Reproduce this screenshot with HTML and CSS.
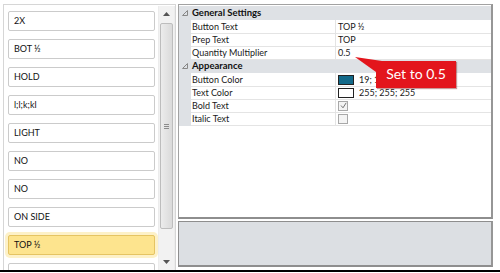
FILE: index.html
```html
<!DOCTYPE html>
<html lang="en">
<head>
  <meta charset="UTF-8" />
  <title>Button Editor</title>
  <link rel="stylesheet" href="styles.css">
</head>
<body>
  <div class="window">
    <div class="list-panel">
      <div class="items">
        <div class="item">2X</div>
        <div class="item">BOT ½</div>
        <div class="item">HOLD</div>
        <div class="item">l;l;k;kl</div>
        <div class="item">LIGHT</div>
        <div class="item">NO</div>
        <div class="item">NO</div>
        <div class="item">ON SIDE</div>
        <div class="item selected">TOP ½</div>
        <div class="item"></div>
      </div>
      <div class="scrollbar">
        <div class="arrow">
          <svg width="7" height="4" viewBox="0 0 7 4"><path d="M0 4 L3.5 0 L7 4 Z" fill="#555"/></svg>
        </div>
        <div class="track">
          <div class="thumb"><span class="grip"></span></div>
        </div>
        <div class="arrow">
          <svg width="7" height="4" viewBox="0 0 7 4"><path d="M0 0 L3.5 4 L7 0 Z" fill="#555"/></svg>
        </div>
      </div>
    </div>

    <div class="right-col">
      <div class="prop-grid">
        <div class="row category">
          <div class="gutter"><svg width="6" height="6" viewBox="0 0 6 6"><path d="M5.5 0.5 L5.5 5.5 L0.5 5.5 Z" fill="none" stroke="#888" stroke-width="1"/></svg></div>
          <div class="cat-name">General Settings</div>
        </div>
        <div class="row">
          <div class="gutter"></div>
          <div class="name">Button Text</div>
          <div class="value">TOP ½</div>
        </div>
        <div class="row">
          <div class="gutter"></div>
          <div class="name">Prep Text</div>
          <div class="value">TOP</div>
        </div>
        <div class="row">
          <div class="gutter"></div>
          <div class="name">Quantity Multiplier</div>
          <div class="value">0.5</div>
        </div>
        <div class="row category">
          <div class="gutter"><svg width="6" height="6" viewBox="0 0 6 6"><path d="M5.5 0.5 L5.5 5.5 L0.5 5.5 Z" fill="none" stroke="#888" stroke-width="1"/></svg></div>
          <div class="cat-name">Appearance</div>
        </div>
        <div class="row">
          <div class="gutter"></div>
          <div class="name">Button Color</div>
          <div class="value"><span class="swatch" style="background:#136a8a"></span>19; 106; 138</div>
        </div>
        <div class="row">
          <div class="gutter"></div>
          <div class="name">Text Color</div>
          <div class="value"><span class="swatch" style="background:#ffffff"></span>255; 255; 255</div>
        </div>
        <div class="row">
          <div class="gutter"></div>
          <div class="name">Bold Text</div>
          <div class="value">
            <span class="check"><svg width="7" height="7" viewBox="0 0 7 7"><path d="M1 3.5 L3 5.8 L6.2 0.8" fill="none" stroke="#777" stroke-width="1"/></svg></span>
          </div>
        </div>
        <div class="row">
          <div class="gutter"></div>
          <div class="name">Italic Text</div>
          <div class="value"><span class="check"></span></div>
        </div>
      </div>
      <div class="description"></div>
    </div>

    <svg class="callout-tail" width="40" height="24" viewBox="0 0 40 24">
      <polygon points="5,5 32,9 26,20" fill="#e3151c"/>
    </svg>
    <div class="callout">Set to 0.5</div>
  </div>
</body>
</html>
```

FILE: styles.css
```css
body {
  margin: 0;
  background: #ffffff;
  font-family: 'Segoe UI', Lato, sans-serif;
  color: #1a1a1a;
}

.window {
  position: relative;
  display: flex;
  gap: 2px;
  height: 266px;
  padding: 4px 7px 0 3px;
  border-bottom: 2px solid #000;
  overflow: hidden;
}

/* left list */
.list-panel {
  width: 171px;
  display: flex;
  border: 1px solid #d6d6d6;
  border-bottom: none;
  background: #fff;
  overflow: hidden;
}

.items {
  width: 147px;
  padding: 6px 3px 0 4px;
  display: flex;
  flex-direction: column;
  gap: 8px;
}

.item {
  flex: none;
  height: 18px;
  line-height: 18px;
  padding-left: 5px;
  border: 1px solid #cbcbcb;
  border-radius: 2px;
  font-size: 9px;
  color: #111;
  background: #fff;
}

.item.selected {
  background: #fde48e;
  border-color: #e5c463;
  box-shadow: 0 0 0 3px #fdf1c8;
}

.scrollbar {
  width: 15px;
  margin-top: 1px;
  display: flex;
  flex-direction: column;
  background: #f2f2f2;
  border-left: 1px solid #ececec;
  border-right: 1px solid #ececec;
}

.arrow {
  height: 16px;
  display: flex;
  align-items: center;
  justify-content: center;
}

.track {
  flex: 1;
  padding-top: 1px;
}

.thumb {
  height: 204px;
  margin: 0 1px;
  border: 1px solid #bdbdbd;
  border-radius: 2px;
  background: linear-gradient(to right, #ececec, #dadada);
  display: flex;
  align-items: center;
  justify-content: center;
}

.grip {
  width: 5px;
  height: 5px;
  border-top: 1px solid #8c8c8c;
  border-bottom: 1px solid #8c8c8c;
  box-sizing: border-box;
  background: linear-gradient(#8c8c8c, #8c8c8c) center / 5px 1px no-repeat;
}

/* right side */
.right-col {
  flex: 1;
  display: flex;
  flex-direction: column;
  gap: 2px;
  padding-bottom: 3px;
}

.prop-grid {
  flex: 1;
  border: 1px solid #a2a2a2;
  border-right: 2px solid #969696;
  border-bottom: 2px solid #8e8e8e;
  background: #fff;
  padding-top: 1px;
}

.row {
  display: grid;
  grid-template-columns: 12px 144px 1fr;
  height: 13px;
  font-size: 9px;
  line-height: 13px;
}

.row.category {
  height: 14px;
  line-height: 14px;
  background: #dee1e5;
}

.gutter {
  background: #dee1e5;
  display: flex;
  align-items: center;
  justify-content: center;
}

.cat-name {
  grid-column: 2 / 4;
  padding-left: 1px;
  font-weight: bold;
  font-size: 9.5px;
  color: #111;
}

.name {
  padding-left: 1px;
  border-bottom: 1px solid #e4e4e4;
}

.value {
  padding-left: 2px;
  border-bottom: 1px solid #e4e4e4;
  border-left: 1px solid #e4e4e4;
  display: flex;
  align-items: center;
  gap: 5px;
}

.swatch {
  width: 14px;
  height: 8px;
  border: 1px solid #222;
}

.check {
  width: 8px;
  height: 8px;
  border: 1px solid #a8a8a8;
  background: #f4f4f4;
  display: flex;
  align-items: center;
  justify-content: center;
}

.description {
  height: 43px;
  background: #dcdfe3;
  border: 1px solid #8e8e8e;
  border-right: 2px solid #969696;
  border-bottom: 2px solid #8e8e8e;
}

/* callout */
.callout {
  position: absolute;
  left: 376px;
  top: 61px;
  width: 80px;
  height: 27px;
  background: #e3151c;
  color: #fff;
  font-size: 14px;
  line-height: 26px;
  text-align: center;
  box-shadow: 1px 1px 1px rgba(120, 0, 0, 0.4);
}

.callout-tail {
  position: absolute;
  left: 350px;
  top: 52px;
}
```
